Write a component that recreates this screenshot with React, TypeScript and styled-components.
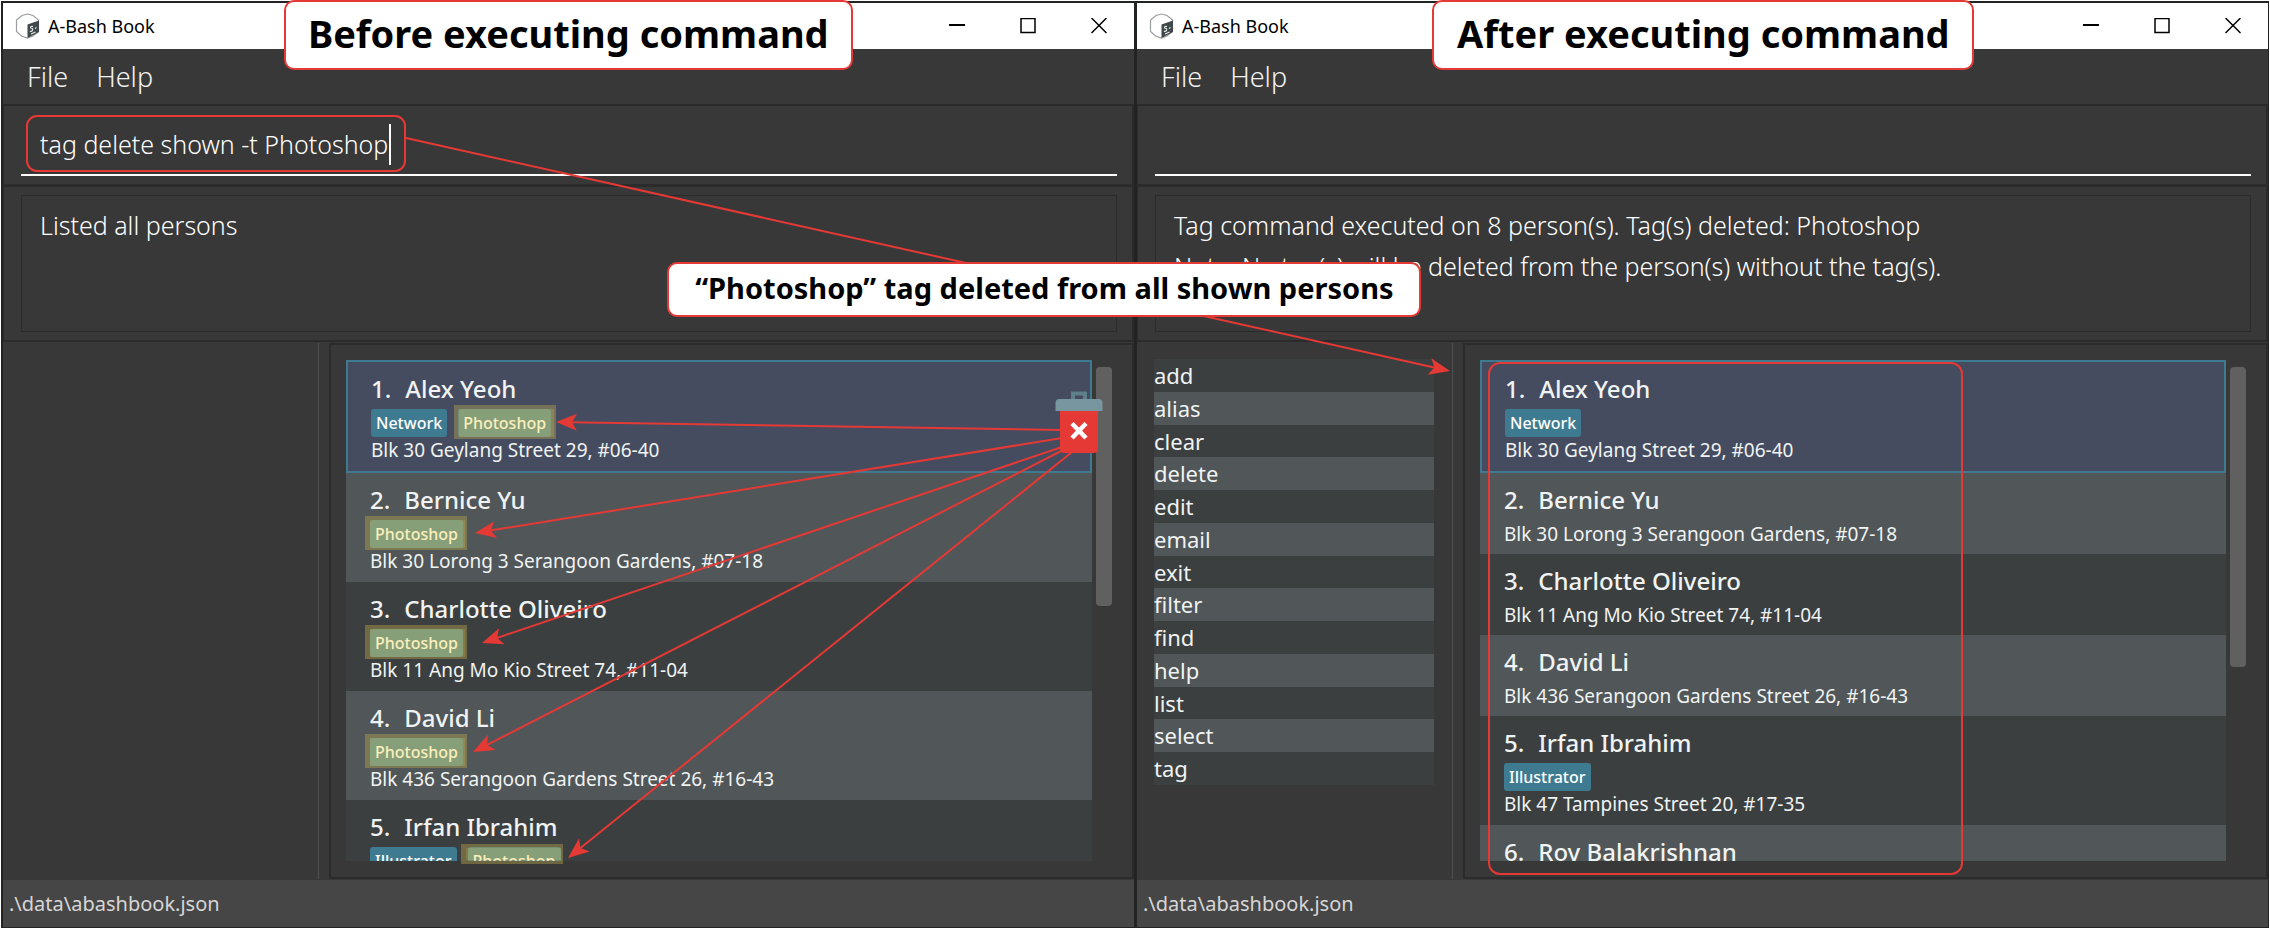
import React from 'react';
import styled, { createGlobalStyle, css } from 'styled-components';

const GlobalStyle = createGlobalStyle`
  * { box-sizing: border-box; }
  body {
    margin: 0;
    background: #fff;
    font-family: 'Noto Sans', 'Open Sans', sans-serif;
  }
  button, input { font: inherit; color: inherit; }
  ul, ol, p { margin: 0; padding: 0; list-style: none; }
`;

const RED = '#e53935';
const EDGE = '#222423';
const LINE = '#2b2b2b';
const PANEL = '#383838';

const Stage = styled.main`
  position: relative;
  display: grid;
  grid-template-columns: 1fr 1fr;
  min-height: 100vh;
  padding: 1px 1px 0;
`;

const Window = styled.section`
  display: grid;
  grid-template-rows: auto auto auto auto minmax(0, 1fr) auto;
  min-width: 0;
  height: calc(100vh - 1px);
  min-height: 600px;
  border: solid ${EDGE};
  border-width: 2px 1px 1px 2px;
  background: ${PANEL};
`;

const TitleBar = styled.header`
  display: flex;
  align-items: center;
  gap: 8px;
  height: 46px;
  padding-left: 12px;
  background: #fff;
  color: #000;
`;

const Title = styled.h1`
  flex: 1;
  margin: 0;
  font-size: 18px;
  font-weight: 400;
`;

const WindowControls = styled.div`
  display: flex;
`;

const WindowButton = styled.button`
  display: grid;
  place-items: center;
  width: 71px;
  height: 46px;
  padding: 0;
  border: 0;
  background: none;
`;

const MenuBar = styled.nav`
  display: flex;
  align-items: center;
  gap: 28px;
  height: 55px;
  padding-left: 24px;
`;

const MenuButton = styled.button`
  padding: 0;
  border: 0;
  background: none;
  color: #f2f2f2;
  font-size: 27px;
  font-weight: 300;
`;

const CommandPane = styled.form`
  padding: 8px 15px 8px 17px;
  border: solid ${LINE};
  border-width: 2px 2px 0 1px;
`;

const CommandLine = styled.div`
  display: flex;
  align-items: center;
  gap: 1px;
  height: 62px;
  padding-left: 19px;
  border-bottom: 2px solid #fff;
`;

const CommandInput = styled.input`
  field-sizing: content;
  min-width: 1px;
  padding: 0;
  border: 0;
  outline: 0;
  background: none;
  color: #fff;
  font-size: 25px;
  font-weight: 300;
`;

const Caret = styled.span`
  width: 2px;
  height: 41px;
  background: #fff;
`;

const ResultPane = styled.div`
  padding: 8px 15px 8px 17px;
  border: solid ${LINE};
  border-width: 3px 2px 2px 1px;
`;

const ResultBox = styled.output`
  display: block;
  height: 137px;
  padding: 9px 18px;
  border: 1px solid ${LINE};
  color: #fff;
  font-size: 25px;
  font-weight: 300;
  line-height: 41px;
`;

const Body = styled.div`
  display: grid;
  grid-template-columns: 316px minmax(0, 1fr);
  gap: 10px;
  min-height: 0;
  padding: 1px 0;
`;

const Sidebar = styled.aside`
  padding: 16px 18px 0 17px;
  border-right: 1px solid #505050;
`;

const CommandList = styled.ul`
  display: grid;
  grid-auto-rows: 1fr;
  height: 426px;
  color: #f0f3f3;
  font-size: 22px;
  line-height: 32px;
`;

const CommandItem = styled.li`
  background: #3c3f3f;
  &:nth-child(even) { background: #515658; }
`;

const ListPane = styled.div`
  display: grid;
  grid-template-columns: minmax(0, 1fr) 16px;
  gap: 4px;
  min-height: 0;
  padding: 15px 20px 16px 15px;
  border: 2px solid ${LINE};
`;

const PersonList = styled.ol`
  min-height: 0;
  overflow: hidden;
  background: #3c3f3f;
`;

const PersonRow = styled.li<{ $selected: boolean; $tagged: boolean }>`
  padding: 10px 24px ${p => (p.$tagged ? 9 : 8)}px;
  background: #3c3f3f;
  color: #f0f3f3;
  &:nth-child(even) { background: #515658; }
  ${p => p.$selected && css`
    padding-left: 23px;
    border: 2px solid #3e7b91;
    background: #454c5f;
  `}
`;

const PersonName = styled.h2`
  display: flex;
  gap: 14px;
  margin: 0;
  font-size: 24px;
  font-weight: 500;
  line-height: 34px;
`;

const Tags = styled.div`
  display: flex;
  gap: 11px;
  padding-top: 3px;
`;

const Tag = styled.span`
  padding: 0 5px;
  border-radius: 3px;
  background: #3e7b91;
  color: #fff;
  font-size: 16px;
  font-weight: 500;
  line-height: 28px;
`;

const Address = styled.p<{ $tagged: boolean }>`
  padding-top: ${p => (p.$tagged ? 1 : 5)}px;
  font-size: 19px;
  line-height: 24px;
`;

const ScrollThumb = styled.div<{ $size: number }>`
  height: ${p => p.$size}px;
  margin-top: 7px;
  border-radius: 4px;
  background: #606060;
`;

const StatusBar = styled.footer`
  height: 47px;
  padding-left: 6px;
  background: #464646;
  color: #d6d6d6;
  font-size: 20px;
  font-weight: 400;
  line-height: 47px;
`;

const Annotations = styled.svg`
  position: absolute;
  inset: 0;
  width: 100%;
  height: 100%;
  pointer-events: none;
`;

const Callout = styled.p<{ $left: string; $top: number; $width: number; $small?: boolean }>`
  position: absolute;
  left: ${p => p.$left};
  top: ${p => p.$top}px;
  width: ${p => p.$width}px;
  height: ${p => (p.$small ? 55 : 70)}px;
  border: 2px solid ${RED};
  border-radius: 10px;
  background: #fff;
  color: #000;
  font-size: ${p => (p.$small ? 29 : 38)}px;
  font-weight: 700;
  line-height: ${p => (p.$small ? 48 : 62)}px;
  text-align: center;
  white-space: nowrap;
`;

function AppIcon() {
  return (
    <svg width="25" height="26" viewBox="0 0 25 26" aria-hidden="true">
      <path d="M12.5 1 L18 2.5 L23.5 7 V18.5 L18 23 L12.5 25 L6.5 23 L1.5 18.5 V7 L7 2.5 Z" fill="#fff" stroke="#9a9e9e" strokeWidth="1.2" />
      <path d="M12.5 11.5 L24 7.5 V19 L12.5 25 Z" fill="#3f484b" />
      <path d="M18 13.5 q-3 -.5 -2.500 1.500 q3 0 2 2.500 q-1.500 1.500 -2.500 .5 M20 15.500 l1.500 -1 M16 21 l4.500 -2" fill="none" stroke="#e6eaea" strokeWidth="1.100" />
    </svg>
  );
}

interface Person {
  name: string;
  tags: string[];
  address: string;
}

interface WindowProps {
  label: string;
  command: string;
  result: string[];
  commands: string[];
  people: Person[];
  thumb: number;
}

function AppWindow({ label, command, result, commands, people, thumb }: WindowProps) {
  return (
    <Window aria-label={label}>
      <TitleBar>
        <AppIcon />
        <Title>A-Bash Book</Title>
        <WindowControls>
          <WindowButton aria-label="Minimize">
            <svg width="16" height="16"><path d="M0 7h16" stroke="#000" strokeWidth="2" /></svg>
          </WindowButton>
          <WindowButton aria-label="Maximize">
            <svg width="16" height="16"><rect x="1" y="0.5" width="14" height="14" fill="none" stroke="#000" strokeWidth="1.500" /></svg>
          </WindowButton>
          <WindowButton aria-label="Close">
            <svg width="16" height="16"><path d="M.5 0l15 15M15.500 0l-15 15" stroke="#000" strokeWidth="1.500" /></svg>
          </WindowButton>
        </WindowControls>
      </TitleBar>
      <MenuBar>
        <MenuButton>File</MenuButton>
        <MenuButton>Help</MenuButton>
      </MenuBar>
      <CommandPane onSubmit={e => e.preventDefault()}>
        <CommandLine>
          <CommandInput aria-label="Command" defaultValue={command} spellCheck={false} />
          {command && <Caret />}
        </CommandLine>
      </CommandPane>
      <ResultPane>
        <ResultBox>
          {result.map(line => <p key={line}>{line}</p>)}
        </ResultBox>
      </ResultPane>
      <Body>
        <Sidebar>
          {commands.length > 0 && (
            <CommandList>
              {commands.map(name => <CommandItem key={name}>{name}</CommandItem>)}
            </CommandList>
          )}
        </Sidebar>
        <ListPane>
          <PersonList>
            {people.map((person, i) => {
              const tagged = person.tags.length > 0;
              return (
                <PersonRow key={person.name} $selected={i === 0} $tagged={tagged}>
                  <PersonName><span>{i + 1}.</span><span>{person.name}</span></PersonName>
                  {tagged && <Tags>{person.tags.map(tag => <Tag key={tag}>{tag}</Tag>)}</Tags>}
                  <Address $tagged={tagged}>{person.address}</Address>
                </PersonRow>
              );
            })}
          </PersonList>
          <ScrollThumb $size={thumb} />
        </ListPane>
      </Body>
      <StatusBar>.\data\abashbook.json</StatusBar>
    </Window>
  );
}

function Arrow({ from, to }: { from: [number, number]; to: [number, number] }) {
  const angle = Math.atan2(from[1] - to[1], from[0] - to[0]);
  const endX = to[0] + Math.cos(angle) * 14;
  const endY = to[1] + Math.sin(angle) * 14;
  return (
    <g>
      <path d={`M${from[0]} ${from[1]}L${endX} ${endY}`} stroke={RED} strokeWidth="2" />
      <path
        d="M0 0L21 -8.500L16 0L21 8.500Z"
        fill={RED}
        transform={`translate(${to[0]} ${to[1]}) rotate(${(angle * 180) / Math.PI})`}
      />
    </g>
  );
}

/* Yellow marker laid over a tag: a darker rim round a lighter middle. */
function Marker({ x, y, height = 34 }: { x: number; y: number; height?: number }) {
  const innerBottom = height < 34 ? y + 16 : y + 32;
  return (
    <g>
      <path
        d={`M${x} ${y}h102v${height}h-102zM${x + 5} ${y + 4}V${innerBottom}h95V${y + 4}z`}
        fill="rgba(192,172,80,.4)"
        fillRule="evenodd"
      />
      <path d={`M${x + 5} ${y + 4}h95V${innerBottom}h-95z`} fill="rgba(245,215,85,.4)" />
    </g>
  );
}

const names = ['Alex Yeoh', 'Bernice Yu', 'Charlotte Oliveiro', 'David Li', 'Irfan Ibrahim', 'Roy Balakrishnan'];
const addresses = [
  'Blk 30 Geylang Street 29, #06-40',
  'Blk 30 Lorong 3 Serangoon Gardens, #07-18',
  'Blk 11 Ang Mo Kio Street 74, #11-04',
  'Blk 436 Serangoon Gardens Street 26, #16-43',
  'Blk 47 Tampines Street 20, #17-35',
];
const otherTags = [['Network'], [], [], [], ['Illustrator'], []];

const after: Person[] = names.map((name, i) => ({ name, address: addresses[i] ?? '', tags: otherTags[i] }));
const before: Person[] = after.slice(0, 5).map((p, i) => ({
  ...p,
  address: i < 4 ? p.address : '',
  tags: [...p.tags, 'Photoshop'],
}));

const commandNames = ['add', 'alias', 'clear', 'delete', 'edit', 'email', 'exit', 'filter', 'find', 'help', 'list', 'select', 'tag'];

export default function App() {
  return (
    <>
      <GlobalStyle />
      <Stage>
        <AppWindow
          label="Before"
          command="tag delete shown -t Photoshop"
          result={['Listed all persons']}
          commands={[]}
          people={before}
          thumb={239}
        />
        <AppWindow
          label="After"
          command=""
          result={[
            'Tag command executed on 8 person(s). Tag(s) deleted: Photoshop',
            'Note: No tag(s) will be deleted from the person(s) without the tag(s).',
          ]}
          commands={commandNames}
          people={after}
          thumb={300}
        />
        <Annotations viewBox="0 0 2270 928" preserveAspectRatio="none" aria-hidden="true">
          <Marker x={454} y={405} />
          <Marker x={365} y={516} />
          <Marker x={365} y={625} />
          <Marker x={365} y={734} />
          <Marker x={461} y={844} height={20} />
          <rect x="27" y="116" width="378" height="55" rx="10" fill="none" stroke={RED} strokeWidth="2" />
          <rect x="1489" y="363" width="473" height="511" rx="11" fill="none" stroke={RED} strokeWidth="2" />
          <Arrow from={[406, 138]} to={[1450, 371]} />
          <Arrow from={[1062, 430]} to={[556, 422]} />
          <Arrow from={[1062, 438]} to={[475, 533]} />
          <Arrow from={[1062, 447]} to={[482, 643]} />
          <Arrow from={[1063, 450]} to={[473, 752]} />
          <Arrow from={[1072, 452]} to={[568, 858]} />
          <path d="M1073 400v-6.500h12v6.500" fill="none" stroke="#5f7f8b" strokeWidth="4" />
          <path d="M1055.500 411v-8a4 4 0 0 1 4-4h39a4 4 0 0 1 4 4v8z" fill="#7896a0" />
          <path d="M1060 411h38v38a4 4 0 0 1-4 4h-30a4 4 0 0 1-4-4z" fill={RED} />
          <path d="M1072 423.500l14 14.500M1086 423.500l-14 14.500" stroke="#fff" strokeWidth="4.500" />
        </Annotations>
        <Callout $left="12.5%" $top={0} $width={569}>Before executing command</Callout>
        <Callout $left="63.1%" $top={0} $width={542}>After executing command</Callout>
        <Callout $left="29.4%" $top={262} $width={754} $small>“Photoshop” tag deleted from all shown persons</Callout>
      </Stage>
    </>
  );
}
